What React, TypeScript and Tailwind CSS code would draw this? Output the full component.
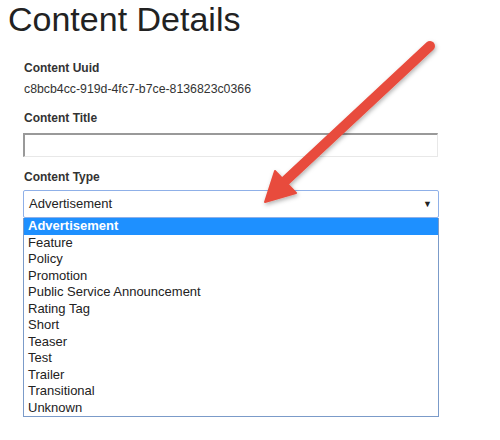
import React from "react";

const contentTypes = [
  "Advertisement",
  "Feature",
  "Policy",
  "Promotion",
  "Public Service Announcement",
  "Rating Tag",
  "Short",
  "Teaser",
  "Test",
  "Trailer",
  "Transitional",
  "Unknown",
];

function Arrow() {
  return (
    <svg
      className="absolute left-0 top-0 pointer-events-none"
      width="500"
      height="440"
      viewBox="0 0 500 440"
    >
      <defs>
        <filter id="arrowShadow" x="-20%" y="-20%" width="140%" height="140%">
          <feDropShadow dx="1" dy="2" stdDeviation="2" floodColor="#000" floodOpacity="0.3" />
        </filter>
      </defs>
      <g filter="url(#arrowShadow)" fill="#e84c3d" stroke="#e84c3d">
        <line x1="430" y1="46" x2="282" y2="184" strokeWidth="10" strokeLinecap="round" />
        <polygon points="265,202 275,171 296,193" strokeWidth="2" strokeLinejoin="round" />
      </g>
    </svg>
  );
}

export default function App() {
  return (
    <div className="relative w-[500px] h-[440px] bg-white overflow-hidden font-['Liberation_Sans',Arial,sans-serif] text-[#333]">
      <h1 className="pl-[8px] pt-[1px] text-[34px] leading-[36px] text-[#222] font-normal">
        Content Details
      </h1>
      <div className="pl-[23px] pt-[23px] w-[439px]">
        <div className="text-[12px] font-bold leading-[16px] pl-[1px]">Content Uuid</div>
        <div className="text-[12.3px] leading-[16px] mt-[5px] pl-[1px]">
          c8bcb4cc-919d-4fc7-b7ce-8136823c0366
        </div>
        <div className="text-[12px] font-bold leading-[16px] mt-[13px] pl-[1px]">Content Title</div>
        <div className="mt-[7px] h-[24px] w-[415px] border-t-2 border-l-2 border-t-[#999] border-l-[#999] border-b border-r border-b-[#e8e8e8] border-r-[#e8e8e8] bg-white" />
        <div className="text-[12px] font-bold leading-[16px] mt-[12px] pl-[1px]">Content Type</div>
        <div className="mt-[5px] w-[416px]">
          <div className="h-[28px] border border-[#8fb0e8] rounded-[2px] flex items-center justify-between pl-[5px] pr-[6px] text-[13px] text-[#222]">
            <span>Advertisement</span>
            <span className="text-[9px] leading-none">▼</span>
          </div>
          <div className="border border-[#7b9bc9] border-t-0 text-[13px] leading-[16.5px] text-[#222]">
            {contentTypes.map((t, i) => (
              <div
                key={t}
                className={
                  i === 0
                    ? "bg-[#1e90ff] text-white font-bold pl-[4px] h-[16.5px]"
                    : "pl-[4px] h-[16.5px]"
                }
              >
                {t}
              </div>
            ))}
          </div>
        </div>
      </div>
      <Arrow />
    </div>
  );
}
